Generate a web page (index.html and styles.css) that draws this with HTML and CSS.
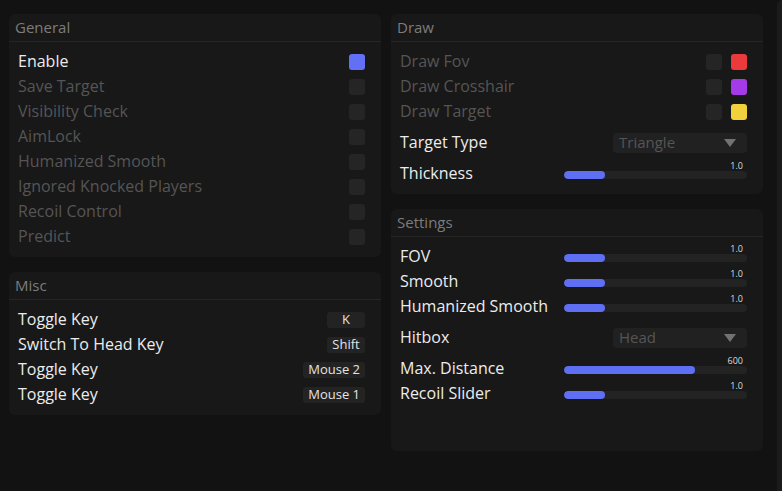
FILE: index.html
```html
<!DOCTYPE html>
<html>
<head>
<meta charset="utf-8">
<link rel="stylesheet" href="styles.css">
</head>
<body>
<div class="app">
  <div class="main">
    <div class="col">
      <section class="panel general">
        <div class="head">General</div>
        <div class="body">
          <div class="row on"><span class="lbl">Enable</span><i class="cb active"></i></div>
          <div class="row"><span class="lbl">Save Target</span><i class="cb"></i></div>
          <div class="row"><span class="lbl">Visibility Check</span><i class="cb"></i></div>
          <div class="row"><span class="lbl">AimLock</span><i class="cb"></i></div>
          <div class="row"><span class="lbl">Humanized Smooth</span><i class="cb"></i></div>
          <div class="row"><span class="lbl">Ignored Knocked Players</span><i class="cb"></i></div>
          <div class="row"><span class="lbl">Recoil Control</span><i class="cb"></i></div>
          <div class="row"><span class="lbl">Predict</span><i class="cb"></i></div>
        </div>
      </section>
      <section class="panel misc">
        <div class="head">Misc</div>
        <div class="body">
          <div class="row on"><span class="lbl">Toggle Key</span><b class="key">K</b></div>
          <div class="row on"><span class="lbl">Switch To Head Key</span><b class="key">Shift</b></div>
          <div class="row on"><span class="lbl">Toggle Key</span><b class="key">Mouse 2</b></div>
          <div class="row on"><span class="lbl">Toggle Key</span><b class="key">Mouse 1</b></div>
        </div>
      </section>
    </div>
    <div class="col">
      <section class="panel draw">
        <div class="head">Draw</div>
        <div class="body">
          <div class="row"><span class="lbl">Draw Fov</span><div class="pair"><i class="cb"></i><i class="sw red"></i></div></div>
          <div class="row"><span class="lbl">Draw Crosshair</span><div class="pair"><i class="cb"></i><i class="sw purple"></i></div></div>
          <div class="row"><span class="lbl">Draw Target</span><div class="pair"><i class="cb"></i><i class="sw yellow"></i></div></div>
          <div class="row on tall"><span class="lbl">Target Type</span><div class="dd"><span>Triangle</span><i class="arrow"></i></div></div>
          <div class="row on"><span class="lbl">Thickness</span><div class="slider"><div class="val">1.0</div><div class="track"><div class="fill" style="width:22.4%"></div></div></div></div>
        </div>
      </section>
      <section class="panel settings">
        <div class="head">Settings</div>
        <div class="body">
          <div class="row on"><span class="lbl">FOV</span><div class="slider"><div class="val">1.0</div><div class="track"><div class="fill" style="width:22.4%"></div></div></div></div>
          <div class="row on"><span class="lbl">Smooth</span><div class="slider"><div class="val">1.0</div><div class="track"><div class="fill" style="width:22.4%"></div></div></div></div>
          <div class="row on"><span class="lbl">Humanized Smooth</span><div class="slider"><div class="val">1.0</div><div class="track"><div class="fill" style="width:22.4%"></div></div></div></div>
          <div class="row on tall"><span class="lbl">Hitbox</span><div class="dd"><span>Head</span><i class="arrow"></i></div></div>
          <div class="row on"><span class="lbl">Max. Distance</span><div class="slider"><div class="val">600</div><div class="track"><div class="fill" style="width:71.6%"></div></div></div></div>
          <div class="row on"><span class="lbl">Recoil Slider</span><div class="slider"><div class="val">1.0</div><div class="track"><div class="fill" style="width:22.4%"></div></div></div></div>
        </div>
      </section>
    </div>
  </div>
  <div class="edge"></div>
</div>
</body>
</html>
```

FILE: styles.css
```css
* { box-sizing: border-box; }
html, body {
  margin: 0;
  background: #121212;
  font-family: "Open Sans", "Noto Sans", sans-serif;
}
.app {
  display: flex;
  height: 491px;
  width: 782px;
  overflow: hidden;
}
.main {
  flex: 1;
  display: grid;
  grid-template-columns: 372px 372px;
  column-gap: 10px;
  align-items: start;
  padding: 14px 0 0 9px;
}
.edge {
  width: 5px;
  background: #1b1b1b;
  border-top-left-radius: 10px;
}
.col {
  display: flex;
  flex-direction: column;
  gap: 15px;
}
.panel {
  background: #181818;
  border-radius: 6px;
}
.head {
  height: 28px;
  line-height: 26px;
  padding-left: 6px;
  font-size: 15px;
  color: #7c7c7c;
  border-bottom: 1px solid #252525;
}
.body {
  padding: 7px 16px 8px 9px;
}
.settings { height: 242px; }
.row {
  height: 25px;
  display: flex;
  align-items: center;
  justify-content: space-between;
  font-size: 16px;
  font-weight: 500;
  color: #555555;
}
.lbl {
  line-height: 20px;
  padding-bottom: 1px;
}
.row.on { color: #ececec; }
.row.tall { height: 37px; }
.cb {
  display: block;
  width: 16px;
  height: 16px;
  border-radius: 3px;
  background: #252525;
}
.cb.active { background: #6170f4; }
.pair {
  display: flex;
  gap: 9px;
}
.sw {
  display: block;
  width: 16px;
  height: 16px;
  border-radius: 3px;
}
.red { background: #eb3a3c; }
.purple { background: #a53be8; }
.yellow { background: #f1d23c; }
.key {
  height: 16px;
  min-width: 38px;
  padding: 0 5px;
  border-radius: 3px;
  background: #232323;
  color: #e4e4e4;
  font-size: 13px;
  font-weight: 500;
  line-height: 15px;
  text-align: center;
}
.dd {
  width: 134px;
  height: 20px;
  border-radius: 4px;
  background: #212121;
  display: flex;
  align-items: center;
  justify-content: space-between;
  padding: 0 11px 0 6px;
  font-size: 15px;
  color: #555555;
  line-height: 18px;
}
.dd span { padding-bottom: 1px; }
.arrow {
  width: 0;
  height: 0;
  border-left: 6px solid transparent;
  border-right: 6px solid transparent;
  border-top: 8px solid #727272;
}
.slider {
  width: 183px;
  align-self: flex-start;
  display: flex;
  flex-direction: column;
}
.val {
  height: 10px;
  line-height: 10px;
  font-size: 9px;
  color: #dcdcdc;
  text-align: right;
  padding-right: 4px;
}
.track {
  height: 8px;
  border-radius: 4px;
  background: #232323;
  overflow: hidden;
}
.fill {
  height: 100%;
  border-radius: 4px;
  background: #5f6ff3;
}
```
